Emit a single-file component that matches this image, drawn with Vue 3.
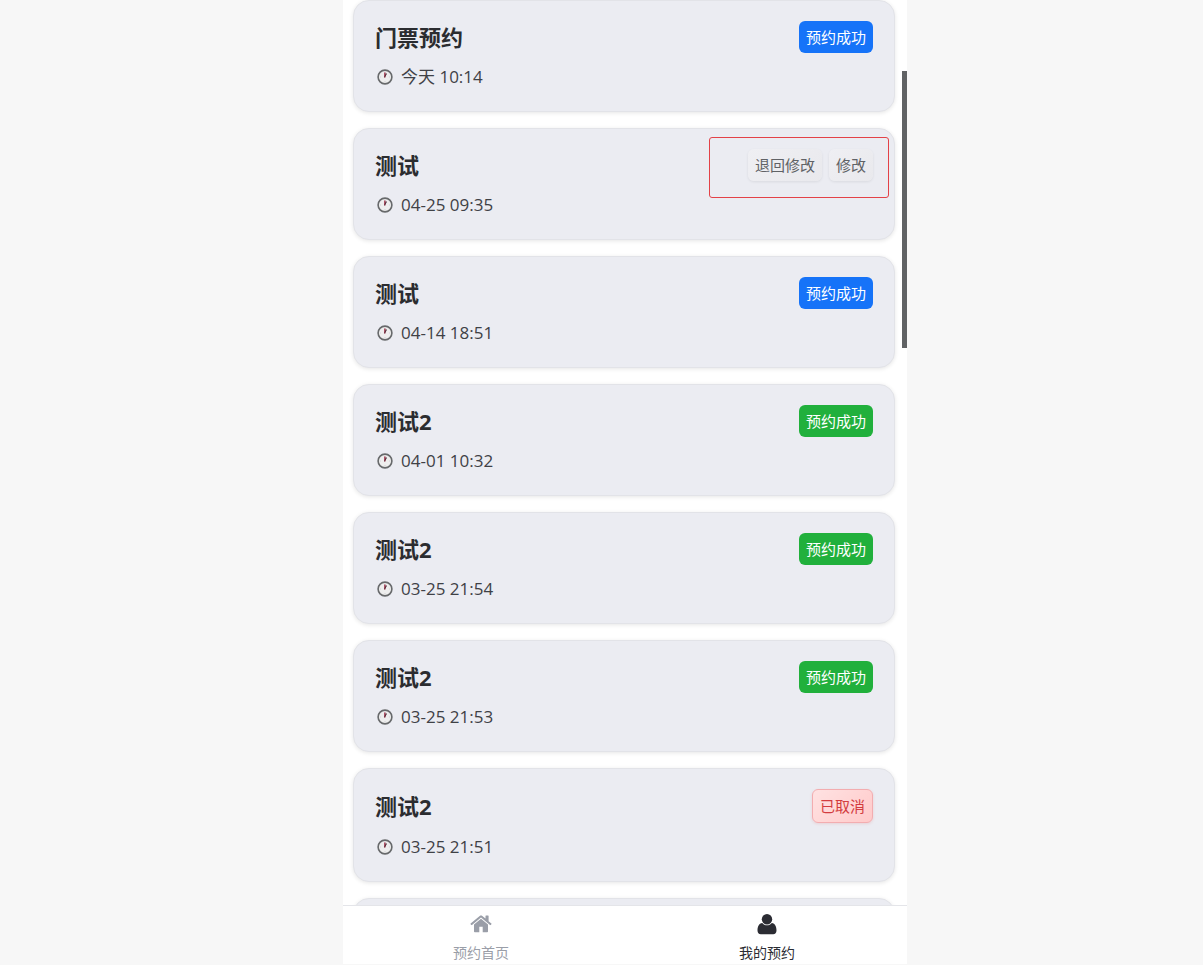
<template>
  <div class="page">
    <div class="phone">
      <main class="list">
        <article
          v-for="item in bookings"
          :key="item.id"
          class="card"
        >
          <div class="card-head">
            <h3 class="card-title">
              {{ item.title }}
            </h3>

            <!-- Actions for bookings still open to changes -->
            <div
              v-if="item.status === 'pending'"
              class="actions"
            >
              <button
                type="button"
                class="btn-plain"
              >
                退回修改
              </button>
              <button
                type="button"
                class="btn-plain"
              >
                修改
              </button>
              <span class="actions-outline" />
            </div>
            <span
              v-else
              class="badge"
              :class="`badge-${item.status}`"
            >{{ item.label }}</span>
          </div>

          <div class="card-time">
            <svg
              class="clock"
              viewBox="0 0 16 16"
              aria-hidden="true"
            >
              <circle
                cx="8"
                cy="8"
                r="6.9"
                fill="#eeeeee"
                stroke="#67696b"
                stroke-width="1.6"
              />
              <path
                d="M8 2.6v1.200M13.2 8h-1M8 13.4v-1.200M2.8 8h1"
                stroke="#c4c5c8"
                stroke-width=".8"
              />
              <path
                d="M7.200 3.400h1.300v5H7.200z"
                fill="#a22843"
              />
              <path
                d="M7.600 8.800l-.3-1 1.500-3.600 1.200.6z"
                fill="#4c2834"
              />
            </svg>
            <time>{{ item.time }}</time>
          </div>
        </article>

        <div class="card card-loading" />
      </main>

      <div class="scroll-thumb" />

      <!-- Bottom tabs -->
      <nav class="tabbar">
        <a
          href="#home"
          class="tab"
        >
          <svg
            class="tab-icon"
            viewBox="0 0 22 22"
            aria-hidden="true"
          >
            <path d="M11 5.7l-7 5.9v6.8c0 .5.3.8.8.8h4.5v-5.4h3.4v5.4h4.5c.5 0 .8-.3.8-.8v-6.8z" />
            <path d="M21.4 10.6L18.6 8.2V3.1c0-.3-.2-.5-.5-.5H16c-.3 0-.5.2-.5.5v2.5L12.3 2.9c-.7-.6-1.9-.6-2.6 0L.6 10.6c-.2.2-.2.5 0 .7l.7.8c.2.2.5.2.7 0l9-7.5 9 7.500c.2.2.5.2.7 0l.7-.8c.2-.2.2-.5 0-.7z" />
          </svg>
          <span>预约首页</span>
        </a>
        <a
          href="#mine"
          class="tab active"
        >
          <svg
            class="tab-icon"
            viewBox="0 0 22 22"
            aria-hidden="true"
          >
            <circle
              cx="11"
              cy="6.3"
              r="5.2"
            />
            <path d="M6.2 10c1.2 1.500 2.900 2.300 4.800 2.300s3.600-.8 4.800-2.300c3.300.5 4.700 3.600 4.700 7.500 0 2.300-1.300 3.800-3.300 3.800H4.800c-2 0-3.300-1.500-3.300-3.800 0-3.900 1.400-7 4.700-7.500z" />
          </svg>
          <span>我的预约</span>
        </a>
      </nav>
    </div>
  </div>
</template>

<script setup>
import { ref } from 'vue'

const bookings = ref([
  { id: 1, title: '门票预约', time: '今天 10:14', status: 'booked', label: '预约成功' },
  { id: 2, title: '测试', time: '04-25 09:35', status: 'pending', label: '' },
  { id: 3, title: '测试', time: '04-14 18:51', status: 'booked', label: '预约成功' },
  { id: 4, title: '测试2', time: '04-01 10:32', status: 'done', label: '预约成功' },
  { id: 5, title: '测试2', time: '03-25 21:54', status: 'done', label: '预约成功' },
  { id: 6, title: '测试2', time: '03-25 21:53', status: 'done', label: '预约成功' },
  { id: 7, title: '测试2', time: '03-25 21:51', status: 'cancelled', label: '已取消' }
])
</script>

<style>
body {
  margin: 0;
  background: #f7f7f7;
}
</style>

<style scoped>
.page {
  display: grid;
  grid-template-columns: 343fr 564fr 296fr;
  height: 100vh;
  overflow: hidden;
  font-family: "Open Sans", "Noto Sans CJK SC", sans-serif;
  color: #2b2c30;
}

.phone {
  grid-column: 2;
  position: relative;
  display: flex;
  flex-direction: column;
  min-width: 0;
  height: 100vh;
  box-sizing: border-box;
  padding-bottom: 1px;
}

.list {
  flex: 1;
  min-height: 0;
  overflow: hidden;
  display: flex;
  flex-direction: column;
  gap: 16px;
  padding: 0 12px 0 10px;
  background: #fff;
}

.card {
  flex-shrink: 0;
  box-sizing: border-box;
  padding: 20px 21px 19px;
  border: 1px solid #e2e3e8;
  border-radius: 16px;
  background: #ebecf2;
  box-shadow: 0 1px 4px rgba(0, 0, 0, 0.1);
}

.card-loading {
  height: 112px;
}

.card-head {
  display: flex;
  justify-content: space-between;
  align-items: center;
}

.card-title {
  margin: 0;
  font-size: 22px;
  line-height: 32px;
  font-weight: 700;
}

.badge,
.btn-plain {
  box-sizing: border-box;
  font-family: inherit;
  font-size: 15px;
  line-height: 24px;
  padding: 4px 7px;
  border: none;
  border-radius: 6px;
}

.badge {
  color: #fff;
}

.badge-booked {
  background: #1673f8;
}

.badge-done {
  background: #21b03c;
}

.badge-cancelled {
  border: 1px solid #f3adb0;
  background: linear-gradient(135deg, #ffe2e2, #ffcaca);
  color: #d33c40;
  box-shadow: 0 1px 3px rgba(220, 60, 60, 0.15);
}

.actions {
  position: relative;
  display: flex;
  gap: 7px;
}

.btn-plain {
  background: linear-gradient(135deg, #efeff3, #e9e9ed);
  color: #606266;
  box-shadow: 0 1px 3px rgba(0, 0, 0, 0.08);
  cursor: pointer;
}

/* Highlight frame around the action buttons */
.actions-outline {
  position: absolute;
  inset: -12px -16px -17px -39px;
  border: 1px solid #e34248;
  border-radius: 3px;
  pointer-events: none;
}

.card-time {
  display: flex;
  align-items: center;
  gap: 8px;
  padding: 0 2px;
  margin-top: 9px;
  font-size: 17px;
  line-height: 30px;
  color: #3f4146;
}

.clock {
  width: 16px;
  height: 16px;
}

.scroll-thumb {
  position: absolute;
  top: 71px;
  right: 0;
  width: 5px;
  height: 277px;
  background: #606264;
}

.tabbar {
  flex-shrink: 0;
  display: flex;
  gap: 10px;
  padding-right: 2px;
  border-top: 1px solid #e4e5e9;
  background: #fff;
}

.tab {
  flex: 1;
  display: flex;
  flex-direction: column;
  align-items: center;
  gap: 7px;
  padding-top: 7px;
  font-size: 14px;
  line-height: 22px;
  color: #9a9ea8;
  text-decoration: none;
}

.tab-icon {
  width: 22px;
  height: 22px;
  fill: currentColor;
}

.tab.active {
  color: #2b2c33;
}
</style>
